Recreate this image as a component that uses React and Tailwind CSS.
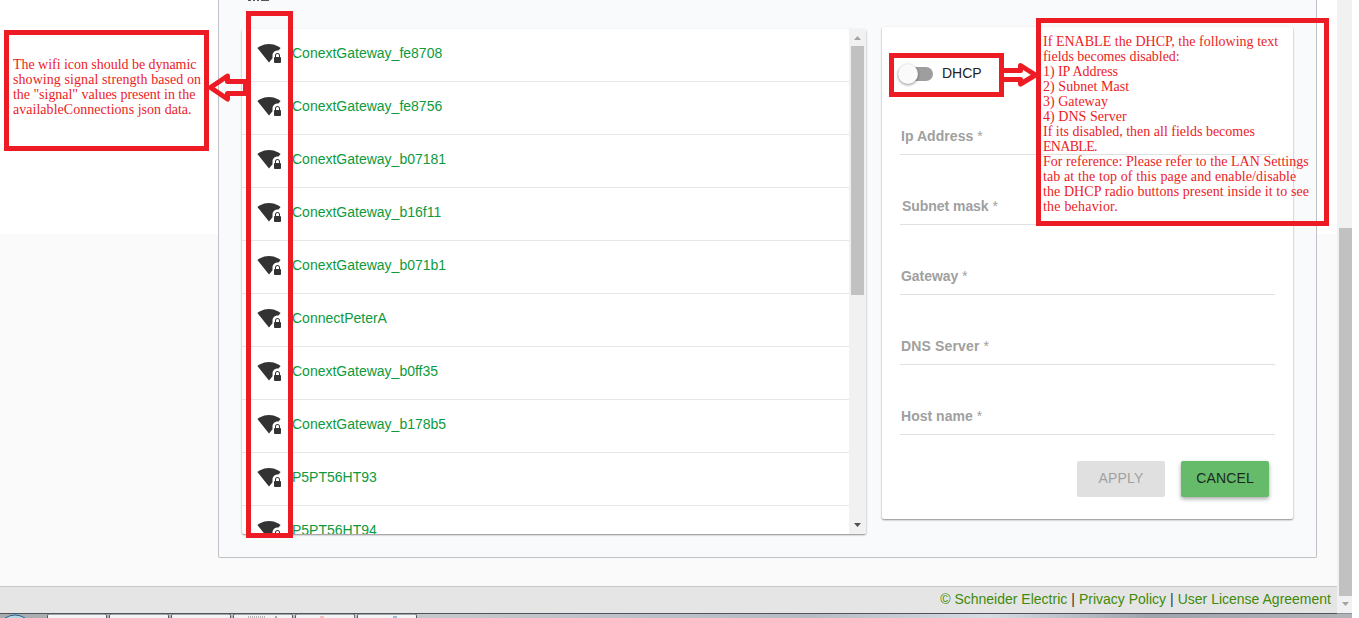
import React from 'react';

const networks = [
  'ConextGateway_fe8708',
  'ConextGateway_fe8756',
  'ConextGateway_b07181',
  'ConextGateway_b16f11',
  'ConextGateway_b071b1',
  'ConnectPeterA',
  'ConextGateway_b0ff35',
  'ConextGateway_b178b5',
  'P5PT56HT93',
  'P5PT56HT94',
];

const fields = [
  ['Ip Address', 'pl-[1px] tracking-[0.05px]'],
  ['Subnet mask', 'pl-[2px] tracking-[-0.05px]'],
  ['Gateway', 'pl-[1px] tracking-[-0.05px]'],
  ['DNS Server', 'pl-[1px] tracking-[0.15px]'],
  ['Host name', 'pl-[1px] tracking-[0.02px]'],
];

const signalNote = [
  ['The wifi icon should be dynamic', 'tracking-[-0.04px]'],
  ['showing signal strength based on', 'tracking-[0.07px]'],
  ['the "signal" values present in the', 'tracking-[-0.04px]'],
  ['availableConnections json data.', 'tracking-[0.03px]'],
];

const dhcpNote = [
  ['If ENABLE the DHCP, the following text', 'tracking-[0.02px]'],
  ['fields becomes disabled:', 'tracking-[-0.04px]'],
  ['1) IP Address', 'tracking-[-0.06px]'],
  ['2) Subnet Mast', 'tracking-[0.05px]'],
  ['3) Gateway', 'tracking-[0px]'],
  ['4) DNS Server', 'tracking-[0.04px]'],
  ['If its disabled, then all fields becomes', 'tracking-[0px]'],
  ['ENABLE.', 'tracking-[-0.7px]'],
  ['For reference: Please refer to the LAN Settings', 'tracking-[0.04px]'],
  ['tab at the top of this page and enable/disable', 'tracking-[0.1px]'],
  ['the DHCP radio buttons present inside it to see', 'tracking-[0.08px]'],
  ['the behavior.', 'tracking-[0.2px]'],
];

function WifiLock() {
  return (
    <svg className="-mt-1 h-6 w-6 shrink-0" viewBox="0 0 24 24" fill="#333">
      <path d="M23 16v-1.5c0-1.4-1.1-2.5-2.5-2.5S18 13.1 18 14.5V16c-.5 0-1 .5-1 1v4c0 .5.5 1 1 1h5c.5 0 1-.5 1-1v-4c0-.5-.5-1-1-1zm-1 0h-3v-1.5c0-.8.7-1.5 1.5-1.5s1.5.7 1.5 1.5V16z" />
      <path d="M15.5 14.5c0-2.8 2.2-5 5-5 .4 0 .7 0 1 .1L23.6 7c-.4-.3-4.9-4-11.6-4C5.3 3 .8 6.7.4 7L12 21.5l3.5-4.3v-2.7z" />
    </svg>
  );
}

function NetworkList() {
  return (
    <section className="mt-[29px] flex h-[505px] w-[624px] overflow-hidden rounded-[2px] bg-white shadow-[0_1px_2px_rgba(0,0,0,0.45)]">
      <ul className="min-w-0 flex-1">
        {networks.map((name) => (
          <li key={name} className="flex h-[53px] items-center border-b border-[#e6e6e6] pl-[15px]">
            <WifiLock />
            <span className="-mt-[3px] ml-[11px] text-[14px] text-[#0d9a3c]">{name}</span>
          </li>
        ))}
      </ul>
      <div className="flex w-[17px] flex-col items-center bg-[#f1f1f1]">
        <svg className="h-[17px] w-[17px] shrink-0" viewBox="0 0 17 17"><path d="M5 11h7L8.5 7z" fill="#a3a3a3" /></svg>
        <div className="h-[249px] w-[13px] bg-[#c1c1c1]" />
        <svg className="mt-auto h-[17px] w-[17px]" viewBox="0 0 17 17"><path d="M5 6h7L8.5 10z" fill="#505050" /></svg>
      </div>
    </section>
  );
}

function DhcpForm() {
  return (
    <section className="mt-[27px] ml-4 flex h-[492px] w-[411px] flex-col rounded-[2px] bg-white pr-[18px] pl-[18px] shadow-[0_1px_2px_rgba(0,0,0,0.45)]">
      <div className="flex h-[93px] items-center">
        <div className="-ml-[2px] flex h-[14px] w-[35px] items-center">
          <div className="flex h-[14px] w-[35px] items-center rounded-full bg-[#9e9e9e]">
            <div className="h-5 w-5 shrink-0 rounded-full bg-[#fafafa] shadow-[0_1px_3px_rgba(0,0,0,0.45)]" />
          </div>
        </div>
        <span className="ml-[9px] text-[14px] text-[#222]">DHCP</span>
      </div>
      {fields.map(([label, style]) => (
        <div key={label} className="mb-[35px] h-[35px] shrink-0 border-b border-[#e0e0e0]">
          <div className={`pt-[6px] text-[14px] leading-[20px] font-bold text-[#a0a0a0] ${style}`}>
            {label}<span className="font-normal"> *</span>
          </div>
        </div>
      ))}
      <div className="-mt-[9px] flex justify-end gap-4 pr-[6px] text-[14px]">
        <button className="h-9 w-[88px] rounded-[2px] bg-[#e0e0e0] pb-[2px] tracking-[0.14px] text-[#a0a0a0]">APPLY</button>
        <button className="h-9 w-[88px] rounded-[2px] bg-[#66bb6a] pb-[2px] tracking-[0.14px] text-[#1b2a1c] shadow-[0_2px_4px_rgba(0,0,0,0.35)]">CANCEL</button>
      </div>
    </section>
  );
}

function Note({ lines }) {
  return lines.map(([text, tracking]) => (
    <p key={text} className={`h-[15px] whitespace-nowrap ${tracking}`}>{text}</p>
  ));
}

function Annotations() {
  return (
    <>
      <div className="absolute top-[30px] left-[4px] h-[121px] w-[205px] border-5 border-[#ed1c24] pt-[22px] pl-[4px] font-['Liberation_Serif',serif] text-[14px] leading-[15px] text-[#ed1c24]">
        <Note lines={signalNote} />
      </div>
      <div className="absolute top-[11px] left-[246px] h-[527px] w-[47px] border-5 border-[#ed1c24]" />
      <div className="absolute top-[53px] left-[889px] h-[44px] w-[115px] border-5 border-[#ed1c24]" />
      <div className="absolute top-[18px] left-[1036px] h-[208px] w-[293px] border-5 border-[#ed1c24] pt-[11px] pl-[2px] font-['Liberation_Serif',serif] text-[14px] leading-[15px] text-[#ed1c24]">
        <Note lines={dhcpNote} />
      </div>
      <svg className="absolute top-[70px] left-[205px] h-[36px] w-[46px]" viewBox="205 70 46 36" fill="none" stroke="#ed1c24" strokeWidth="5" strokeLinejoin="round">
        <path d="M245.5 81.500H227.500V76L210.500 87.500L227.500 99V93.500H245.500Z" />
      </svg>
      <svg className="absolute top-[60px] left-[1000px] h-[30px] w-[40px]" viewBox="1000 60 40 30" fill="none" stroke="#ed1c24" strokeWidth="5" strokeLinejoin="round">
        <path d="M1003 70.500H1020.500V65.500L1035.500 75L1020.500 84V79.500H1003" />
      </svg>
    </>
  );
}

function Taskbar() {
  return (
    <svg className="block h-[5px] w-full" viewBox="0 0 1359 5" preserveAspectRatio="none">
      <defs>
        <linearGradient id="glass">
          <stop offset="0" stopColor="#a9acaf" />
          <stop offset=".32" stopColor="#c3c8cc" />
          <stop offset=".6" stopColor="#b5bcc4" />
          <stop offset=".73" stopColor="#d5dce2" />
          <stop offset=".85" stopColor="#9fa5ac" />
          <stop offset="1" stopColor="#b0b5ba" />
        </linearGradient>
      </defs>
      <path d="M0 0h1352v5H0z" fill="url(#glass)" />
      <path d="M0 0h1337v1H0z" fill="#50535a" />
      <path d="M1337 0h15v1h-15z" fill="#8d9094" />
      {[47, 109, 171, 233, 295, 357].map((x) => (
        <path key={x} d={`M${x + 0.5} 5V2.500q0-1.500 1.500-1.500h56q1.500 0 1.500 1.500V5`} fill="#f2f3f4" stroke="#55585c" />
      ))}
      <path d="M354.500 1v4" stroke="#777" />
      <path d="M5 5q10-6 20 0" fill="#b7d5e7" stroke="#28658f" />
      <path d="M248 4h18" stroke="#777" strokeDasharray="1 1" />
      <path d="M275 4h2" stroke="#7d4f5c" />
      <path d="M320 4h4" stroke="#ee8d91" />
      <path d="M393 4h4" stroke="#368dbd" />
    </svg>
  );
}

export default function App() {
  return (
    <div className="relative flex h-[618px] w-[1359px] flex-col overflow-hidden bg-white font-['Liberation_Sans',Arial,sans-serif]">
      <div className="flex h-[613px]">
        <div className="flex w-[1337px] flex-col bg-[linear-gradient(#fff_234px,#fafafa_234px)]">
          <main className="ml-[218px] flex h-[558px] w-[1099px] items-start rounded-b-[2px] border-x border-b border-[#bfc1c4] bg-[#f9fafc] pl-[23px]">
            <NetworkList />
            <DhcpForm />
          </main>
          <footer className="mt-[28px] flex h-[27px] items-center justify-end gap-1 border-t border-[#c8c8c8] bg-[#e5e5e5] pr-[6px] pb-[2px] text-[14px] text-[#3f8a09]">
            <a>© Schneider Electric</a>
            <span className="text-[#333]">|</span>
            <a>Privacy Policy</a>
            <span className="text-[#333]">|</span>
            <a>User License Agreement</a>
          </footer>
        </div>
        <div className="flex w-[15px] flex-col items-end bg-[#f1f1f1]">
          <div className="mt-[228px] h-[368px] w-[13px] bg-[#c1c1c1]" />
          <svg className="h-[17px] w-[15px]" viewBox="0 0 15 17"><path d="M5 6h7L8.500 10z" fill="#a3a3a3" /></svg>
        </div>
      </div>
      <Taskbar />
      <svg className="absolute top-0 left-[247px] h-[1px] w-[24px]" viewBox="0 0 24 1">
        <path d="M1 .5h3M6 .5h2M10 .5h2M14 .5h8" stroke="#55565c" />
      </svg>
      <Annotations />
    </div>
  );
}
